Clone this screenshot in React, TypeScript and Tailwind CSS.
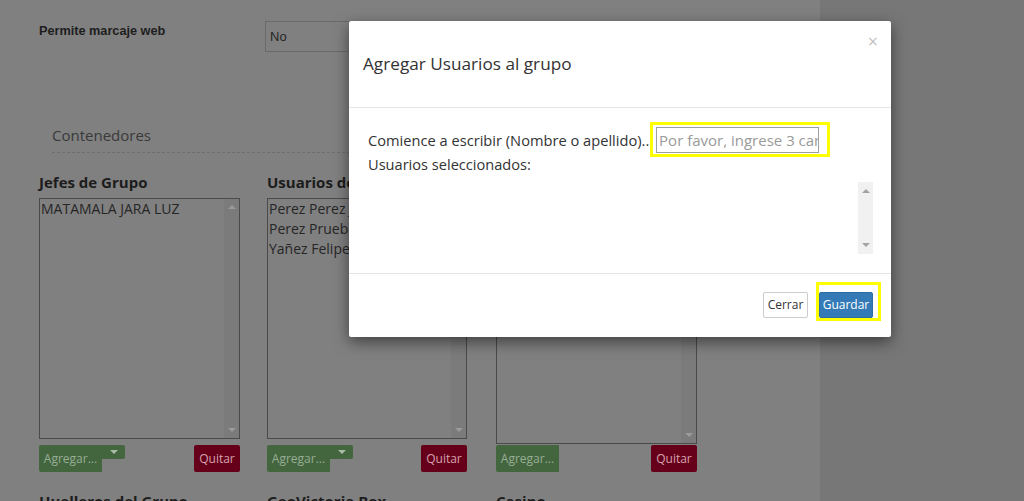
import React from "react";

const OPEN = { fontFamily: '"Open Sans", "Liberation Sans", sans-serif' };
const ARIAL = { fontFamily: '"Liberation Sans", Arial, sans-serif' };

function ListBox({ items, h }: { items: string[]; h: string }) {
  return (
    <div className={`flex border border-[#4a4a4a] bg-[#808080] ${h}`}>
      <div className="flex-1 pl-[1px] text-[14px] leading-[20px] text-[#262626] overflow-hidden whitespace-nowrap">
        {items.map((t) => (
          <div key={t}>{t}</div>
        ))}
      </div>
      <div className="w-[15px] bg-[#7b7b7b] flex flex-col items-center justify-between py-[6px]">
        <div className="w-0 h-0 border-l-[4px] border-r-[4px] border-b-[4px] border-l-transparent border-r-transparent border-b-[#9a9a9a]" />
        <div className="w-0 h-0 border-l-[4px] border-r-[4px] border-t-[4px] border-l-transparent border-r-transparent border-t-[#9a9a9a]" />
      </div>
    </div>
  );
}

function Buttons({ caret }: { caret: boolean }) {
  return (
    <div className="flex items-start h-[27px]">
      <div className="h-[27px] w-[63px] bg-[#44663f] rounded-l-[2px] flex items-center justify-center text-[12px] text-[#98ad95]">
        Agregar...
      </div>
      {caret && (
        <div className="h-[14px] w-[23px] bg-[#44663f] rounded-r-[2px] flex items-center justify-center">
          <div className="w-0 h-0 border-l-[4px] border-r-[4px] border-t-[4px] border-l-transparent border-r-transparent border-t-[#a9bba6]" />
        </div>
      )}
      <div className="ml-auto h-[27px] w-[46px] bg-[#66001a] rounded-[2px] flex items-center justify-center text-[12px] text-[#d6a3af]">
        Quitar
      </div>
    </div>
  );
}

function Column({
  title,
  items,
  caret,
  listH,
  gap,
  bottom,
  cls,
}: {
  title: string;
  items: string[];
  caret: boolean;
  listH: string;
  gap: string;
  bottom: string;
  cls: string;
}) {
  return (
    <div className={`flex flex-col ${cls}`}>
      <div className="text-[15px] font-bold leading-[20px] text-[#1c1c1c] whitespace-nowrap">{title}</div>
      <div className="mt-[6px]">
        <ListBox items={items} h={listH} />
      </div>
      <div className={gap}>
        <Buttons caret={caret} />
      </div>
      <div className="mt-[19px] text-[15px] font-bold leading-[20px] text-[#1c1c1c] whitespace-nowrap">{bottom}</div>
    </div>
  );
}

export default function App() {
  return (
    <div className="relative w-[1024px] h-[501px] overflow-hidden flex" style={OPEN}>
      <div className="w-[820px] h-full bg-[#808080] flex flex-col">
        <div className="flex pt-[21px] pl-[39px]">
          <div className="w-[226px] mt-[3px] text-[12.7px] leading-[15px] font-bold text-[#1e1e1e]" style={ARIAL}>
            Permite marcaje web
          </div>
          <div
            className="w-[300px] h-[31px] border border-[#6a6a6a] flex items-center pl-[4px] text-[13px] text-[#262626]"
            style={ARIAL}
          >
            No
          </div>
        </div>
        <div className="ml-[52px] mr-[40px] mt-[73px] pb-[7px] border-b border-dashed border-[#6e6e6e] text-[15px] leading-[20px] text-[#3a3a3a]">
          Contenedores
        </div>
        <div className="flex mt-[19px] pl-[39px]">
          <Column
            title="Jefes de Grupo"
            items={["MATAMALA JARA LUZ"]}
            caret
            listH="h-[241px]"
            gap="mt-[6px]"
            bottom="Huelleros del Grupo"
            cls="w-[201px]"
          />
          <Column
            title="Usuarios del Grupo"
            items={["Perez Perez Juan", "Perez Prueba Pedro", "Yañez Felipe Andrés"]}
            caret
            listH="h-[241px]"
            gap="mt-[6px]"
            bottom="GeoVictoria Box"
            cls="w-[200px] ml-[27px]"
          />
          <Column
            title="Supervisores"
            items={[]}
            caret={false}
            listH="h-[246px]"
            gap="mt-[1px]"
            bottom="Casino"
            cls="w-[201px] ml-[29px]"
          />
        </div>
      </div>
      <div className="flex-1 h-full bg-[#777777]" />

      {/* Modal */}
      <div className="absolute left-[349px] top-[21px] w-[542px] bg-white rounded-[2px] shadow-[0_5px_15px_rgba(0,0,0,0.5)]">
        <div className="relative h-[87px] border-b border-[#e5e5e5] flex items-center pl-[14px]">
          <div className="text-[17.2px] leading-[24px] text-[#333333]">Agregar Usuarios al grupo</div>
          <div className="absolute right-[13px] top-[8px] text-[18px] leading-[24px] text-[#c2c2c2]">×</div>
        </div>
        <div className="pt-[19px] pl-[19px] pr-[18px] pb-[19px]">
          <div className="flex items-center h-[26px]">
            <span className="text-[14.65px] leading-[20px] text-[#333333] whitespace-nowrap">
              Comience a escribir (Nombre o apellido)...
            </span>
            <div className="relative ml-[3px]">
              <div className="w-[163px] h-[26px] border border-[#a0a0a0] flex items-center pl-[2px] overflow-hidden whitespace-nowrap text-[15px] text-[#9a9a9a]">
                Por favor, ingrese 3 caracteres
              </div>
              <div className="absolute left-[-6px] top-[-5px] right-[-11px] bottom-[-4px] border-[3px] border-[#ffff00]" />
            </div>
          </div>
          <div className="mt-[1px] text-[14.6px] leading-[20px] text-[#333333]">Usuarios seleccionados:</div>
          <div className="mt-[8px] h-[72px] flex justify-end">
            <div className="w-[15px] h-full bg-[#f1f1f1] flex flex-col items-center justify-between py-[7px]">
              <div className="w-0 h-0 border-l-[4px] border-r-[4px] border-b-[4px] border-l-transparent border-r-transparent border-b-[#a3a3a3]" />
              <div className="w-0 h-0 border-l-[4px] border-r-[4px] border-t-[4px] border-l-transparent border-r-transparent border-t-[#a3a3a3]" />
            </div>
          </div>
        </div>
        <div className="border-t border-[#e5e5e5] pt-[18px] pb-[19px] pr-[18px] flex justify-end gap-[11px]">
          <div className="h-[26px] w-[45px] border border-[#cccccc] rounded-[2px] bg-white flex items-center justify-center text-[12px] text-[#333333]">
            Cerrar
          </div>
          <div className="relative">
            <div className="h-[26px] w-[54px] bg-[#337ab7] border border-[#2e6da4] rounded-[2px] flex items-center justify-center text-[12px] text-white">
              Guardar
            </div>
            <div className="absolute left-[-3px] top-[-10px] right-[-8px] bottom-[-3px] border-[3px] border-[#ffff00]" />
          </div>
        </div>
      </div>
    </div>
  );
}
